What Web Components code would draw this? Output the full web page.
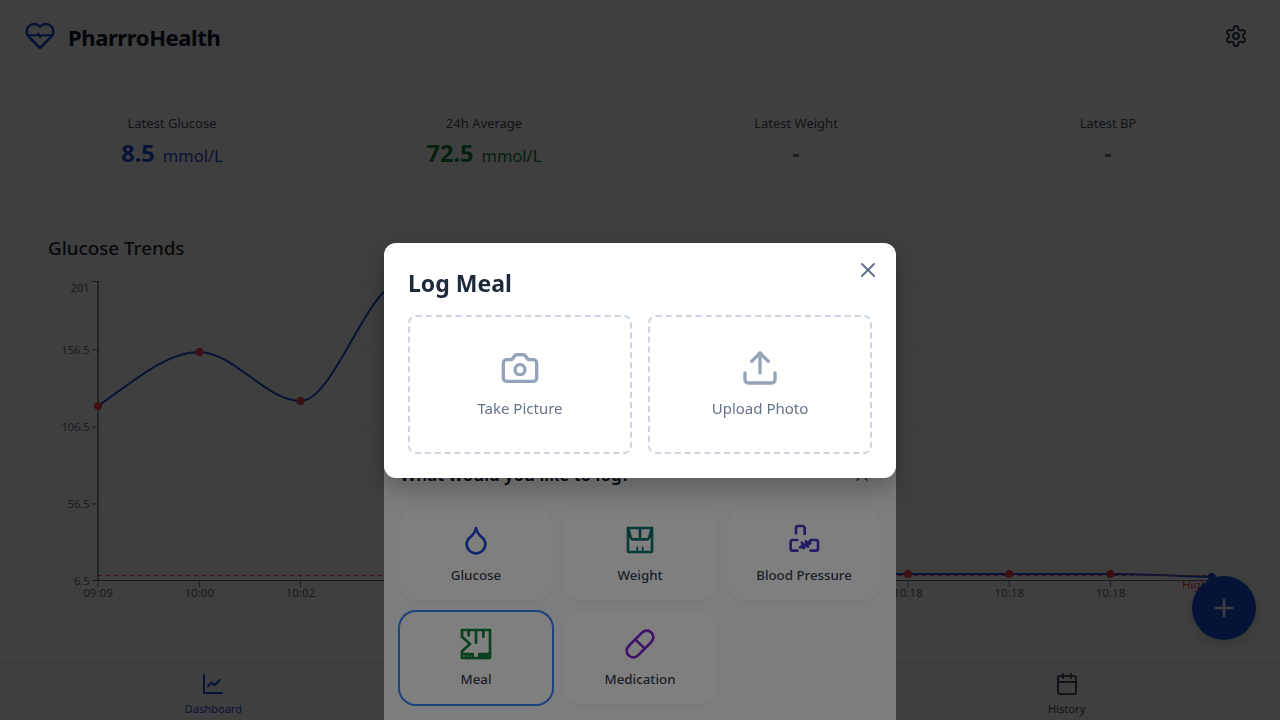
<!DOCTYPE html>
<html lang="en">
<head>
<meta charset="utf-8">
<title>PharrroHealth</title>
<style>
    html, body { margin: 0; height: 100%; overflow: hidden; }
    body { font-family: "Noto Sans", "Liberation Sans", sans-serif; color: #1e293b; background: #fcfdfd; }
</style>
</head>
<body>
<pharrro-app>
    <app-header slot="header"></app-header>
    <stat-row slot="main">
        <stat-card label="Latest Glucose" value="8.5" unit="mmol/L" color="#1d4ed8"></stat-card>
        <stat-card label="24h Average" value="72.5" unit="mmol/L" color="#15803d"></stat-card>
        <stat-card label="Latest Weight" value="-" color="#64748b"></stat-card>
        <stat-card label="Latest BP" value="-" color="#64748b"></stat-card>
    </stat-row>
    <trend-chart slot="main"></trend-chart>
    <bottom-nav slot="nav"></bottom-nav>
    <fab-button slot="fab"></fab-button>
</pharrro-app>

<overlay-layer place="end">
    <log-sheet>
        <log-type icon="droplet" color="#1d4ed8" label="Glucose"></log-type>
        <log-type icon="scale" color="#0f766e" label="Weight"></log-type>
        <log-type icon="pressure" color="#4338ca" label="Blood Pressure"></log-type>
        <log-type icon="meal" color="#15803d" label="Meal" selected></log-type>
        <log-type icon="pill" color="#7e22ce" label="Medication"></log-type>
    </log-sheet>
</overlay-layer>

<overlay-layer place="center">
    <meal-modal>
        <capture-option icon="camera" label="Take Picture"></capture-option>
        <capture-option icon="upload" label="Upload Photo"></capture-option>
    </meal-modal>
</overlay-layer>

<script>
const ICONS = {
    heart: '<path d="M19 14c1.49-1.46 3-3.21 3-5.5A5.5 5.5 0 0 0 16.5 3c-1.76 0-3 .5-4.5 2-1.5-1.5-2.74-2-4.5-2A5.5 5.5 0 0 0 2 8.5c0 2.3 1.5 4.05 3 5.5l7 7Z"/><path d="M2.500 11.500H10l1-1.500 1 3 1-1.500h8.500" stroke-width="1.500"/>',
    gear: '<path d="M12.220 2h-.44a2 2 0 0 0-2 2v.18a2 2 0 0 1-1 1.730l-.43.25a2 2 0 0 1-2 0l-.15-.08a2 2 0 0 0-2.730.73l-.22.38a2 2 0 0 0 .73 2.730l.15.1a2 2 0 0 1 1 1.720v.51a2 2 0 0 1-1 1.740l-.15.09a2 2 0 0 0-.73 2.730l.22.38a2 2 0 0 0 2.730.73l.15-.08a2 2 0 0 1 2 0l.43.25a2 2 0 0 1 1 1.730V20a2 2 0 0 0 2 2h.44a2 2 0 0 0 2-2v-.18a2 2 0 0 1 1-1.730l.43-.25a2 2 0 0 1 2 0l.15.08a2 2 0 0 0 2.730-.73l.22-.39a2 2 0 0 0-.73-2.730l-.15-.08a2 2 0 0 1-1-1.740v-.5a2 2 0 0 1 1-1.740l.15-.09a2 2 0 0 0 .73-2.730l-.22-.38a2 2 0 0 0-2.730-.73l-.15.08a2 2 0 0 1-2 0l-.43-.25a2 2 0 0 1-1-1.730V4a2 2 0 0 0-2-2z"/><circle cx="12" cy="12" r="3"/>',
    chart: '<path d="M3 3v18h18"/><path d="m18.700 8-5.100 5.200-2.800-2.700L7 14.300"/>',
    calendar: '<path d="M8 2v4"/><path d="M16 2v4"/><rect x="3" y="4" width="18" height="18" rx="2"/><path d="M3 10h18"/>',
    plus: '<path d="M5 12h14"/><path d="M12 5v14"/>',
    close: '<path d="M18 6 6 18"/><path d="m6 6 12 12"/>',
    droplet: '<path d="M12 22a7 7 0 0 0 7-7c0-2-1-3.900-3-5.500s-3.500-4-4-6.500c-.5 2.500-2 4.900-4 6.500C6 11.100 5 13 5 15a7 7 0 0 0 7 7z"/>',
    scale: '<path d="M3 3h18v17a1 1 0 0 1-1 1H4a1 1 0 0 1-1-1z"/><path d="M3.200 3 5 10q.3 1.500 2 1.500h10q1.700 0 2-1.500l1.800-7"/><path d="M12 3v8.500"/><path d="M10 17.500V21" stroke-width="1.300"/><path d="M14 17.500V21" stroke-width="1.300"/>',
    pressure: '<path d="M6 7V3a1.500 1.500 0 0 1 1.500-1.500h3.500A1.500 1.500 0 0 1 12.500 3v4.500"/><path d="M7 12H3.500A1.500 1.500 0 0 0 2 13.500v5A1.500 1.500 0 0 0 3.500 20H7"/><path d="M17 12h4a1.500 1.500 0 0 1 1.500 1.500v5A1.500 1.500 0 0 1 21 20h-4"/><path d="M9 17.500 16.500 13"/><path d="M11 18 17 14.500" stroke-width="1.500"/><path d="M10.500 14 12 18"/><path d="M13.500 13 15 17"/>',
    meal: '<path d="M1.500 1.500h21v21h-21v-5L7.500 12 1.500 6.500z"/><path d="M6.500 1.500v4"/><path d="M12 1.500V11"/><path d="M17.500 1.500v5"/><path d="M1.500 19.500h8v3"/><path d="M14.500 22.500v-3h8"/><path d="M4.500 19.500v3"/><path d="M18.500 19.500v3"/><path d="M7 20v2.500"/><path d="M16.500 20v2.500"/><path d="M20.500 20v2.500"/>',
    pill: '<path d="m10.500 20.500 10-10a4.950 4.950 0 1 0-7-7l-10 10a4.950 4.950 0 1 0 7 7Z"/><path d="m8.500 8.500 7 7"/>',
    camera: '<path d="M14.500 4h-5L7 7H4a2 2 0 0 0-2 2v9a2 2 0 0 0 2 2h16a2 2 0 0 0 2-2V9a2 2 0 0 0-2-2h-3l-2.500-3z"/><circle cx="12" cy="13" r="3"/>',
    upload: '<path d="M21 15v4a2 2 0 0 1-2 2H5a2 2 0 0 1-2-2v-4"/><polyline points="17 8 12 3 7 8"/><line x1="12" x2="12" y1="3" y2="15"/>',
};

class AppIcon extends HTMLElement {
    connectedCallback() {
        const size = this.getAttribute('size') || 24;
        this.attachShadow({ mode: 'open' });
        this.shadowRoot.innerHTML = `
            <style>
                :host { display: block; width: ${size}px; height: ${size}px; flex: none; }
                svg { display: block; }
            </style>
            <svg width="${size}" height="${size}" viewBox="0 0 24 24" fill="none" stroke="currentColor"
                stroke-width="2" stroke-linecap="round" stroke-linejoin="round">${ICONS[this.getAttribute('name')]}</svg>
        `;
    }
}

class PharrroApp extends HTMLElement {
    constructor() {
        super();
        this.attachShadow({ mode: 'open' });
        this.shadowRoot.innerHTML = `
            <style>
                :host { display: flex; flex-direction: column; height: 720px; position: relative; }
                main { flex: 1; min-height: 0; padding: 24px 24px 0; display: flex; flex-direction: column; gap: 24px; }
            </style>
            <slot name="header"></slot>
            <main><slot name="main"></slot></main>
            <slot name="nav"></slot>
            <slot name="fab"></slot>
        `;
    }
}

class AppHeader extends HTMLElement {
    constructor() {
        super();
        this.attachShadow({ mode: 'open' });
        this.shadowRoot.innerHTML = `
            <style>
                :host {
                    display: flex; align-items: center; justify-content: space-between;
                    padding: 20px 32px 20px 24px; background: #fff; border-bottom: 1px solid #f1f5f9;
                }
                .brand { display: flex; align-items: center; gap: 12px; }
                app-icon.logo { color: #1d4ed8; }
                h1 { margin: 0; padding-top: 2px; font-size: 22px; letter-spacing: -.4px; line-height: 30px; font-weight: 700; color: #0f172a; }
                .gear { color: #334155; }
            </style>
            <div class="brand">
                <app-icon class="logo" name="heart" size="32"></app-icon>
                <h1>PharrroHealth</h1>
            </div>
            <app-icon class="gear" name="gear"></app-icon>
        `;
    }
}

class StatRow extends HTMLElement {
    constructor() {
        super();
        this.attachShadow({ mode: 'open' });
        this.shadowRoot.innerHTML = `
            <style>
                :host { display: grid; grid-template-columns: repeat(4, 1fr); gap: 16px; }
            </style>
            <slot></slot>
        `;
    }
}

class StatCard extends HTMLElement {
    connectedCallback() {
        const unit = this.getAttribute('unit');
        this.attachShadow({ mode: 'open' });
        this.shadowRoot.innerHTML = `
            <style>
                :host {
                    display: block; height: 88px; box-sizing: border-box; padding: 16px 16px 0; text-align: center;
                    background: #fff; border-radius: 16px; box-shadow: 0 1px 2px rgba(0,0,0,.05);
                }
                .label { font-size: 13px; line-height: 20px; color: #475569; }
                .value { margin-top: 4px; line-height: 32px; color: ${this.getAttribute('color')}; }
                b { font-size: 23.500px; font-weight: 700; }
                span { font-size: 16.500px; margin-left: 8px; }
            </style>
            <div class="label">${this.getAttribute('label')}</div>
            <div class="value"><b>${this.getAttribute('value')}</b>${unit ? `<span>${unit}</span>` : ''}</div>
        `;
    }
}

class TrendChart extends HTMLElement {
    constructor() {
        super();
        this.attachShadow({ mode: 'open' });
        const xs = Array.from({ length: 12 }, (_, i) => 98 + i * 101.25);
        const ys = [406, 352, 401, 282, 574, 574, 574, 574, 574, 574, 574, 577];
        const times = ['09:09', '10:00', '10:02', '10:05', '10:18', '10:18', '10:18', '10:18', '10:18', '10:18', '10:18', '10:18'];
        const yTicks = [[281.500, 288, '201'], [350, 350, '156.5'], [427, 427, '106.5'], [504, 504, '56.5'], [580.500, 580.500, '6.5']];

        // monotone tangents, same idea as the chart lib's curve
        const slopes = xs.slice(1).map((x, i) => (ys[i + 1] - ys[i]) / (x - xs[i]));
        const tangent = slopes.map((s, i) => {
            if (i === 0) return s;
            const p = slopes[i - 1];
            return p * s <= 0 ? 0 : 2 * p * s / (p + s);
        });
        tangent[0] = slopes[0] * 1.3;
        tangent.push(slopes[slopes.length - 1]);
        let curve = `M${xs[0]} ${ys[0]}`;
        for (let i = 1; i < xs.length; i++) {
            const dx = (xs[i] - xs[i - 1]) / 3;
            curve += `C${xs[i - 1] + dx} ${ys[i - 1] + tangent[i - 1] * dx} ${xs[i] - dx} ${ys[i] - tangent[i] * dx} ${xs[i]} ${ys[i]}`;
        }

        const grid = [
            ...yTicks.slice(0, 4).map(t => `<line class="grid" x1="98" x2="1212" y1="${t[0]}" y2="${t[0]}"/>`),
            ...xs.map(x => `<line class="grid" x1="${x}" x2="${x}" y1="281" y2="580"/>`),
        ].join('');
        const yAxis = yTicks.map(t => `
            <line class="axis" x1="92" x2="98" y1="${t[0]}" y2="${t[0]}"/>
            <text class="y" x="89.500" y="${t[1] + 4}" text-anchor="end">${t[2]}</text>`).join('');
        const xAxis = xs.map((x, i) => `
            <line class="axis" x1="${x}" x2="${x}" y1="580.500" y2="587"/>
            <text x="${x}" y="596.500" text-anchor="middle">${times[i]}</text>`).join('');
        const dots = xs.map((x, i) => `<circle cx="${x}" cy="${ys[i]}" r="4" fill="${i === 11 ? '#1d4ed8' : '#ef4444'}"/>`).join('');

        this.shadowRoot.innerHTML = `
            <style>
                :host {
                    display: block; flex: 1; min-height: 0; box-sizing: border-box; padding: 24px 24px 0; margin-bottom: 23px;
                    background: #fff; border-radius: 16px; box-shadow: 0 1px 2px rgba(0,0,0,.05);
                }
                h2 { margin: 1px 0 10px; font-size: 18.800px; line-height: 28px; font-weight: 500; color: #1e293b; }
                svg { display: block; overflow: visible; }
                text { font-size: 11.600px; fill: #64748b; }
                text.y { font-size: 11px; }
                .grid { stroke: #e2e8f0; stroke-dasharray: 3 3; }
                .axis { stroke: #64748b; }
            </style>
            <h2>Glucose Trends</h2>
            <svg width="1184" height="340" viewBox="48 272 1184 340">
                ${grid}
                <line x1="98" x2="98" y1="281" y2="581" stroke="#64748b" stroke-width="1.500"/>
                <line class="axis" x1="98" x2="1212" y1="580.500" y2="580.500"/>
                ${yAxis}${xAxis}
                <path d="${curve}" fill="none" stroke="#1d4ed8" stroke-width="2"/>
                <line x1="98" x2="1212" y1="575.500" y2="575.500" stroke="#ef4444" stroke-dasharray="4 4"/>
                ${dots}
                <text x="1182" y="589" style="fill:#ef4444">High</text>
            </svg>
        `;
    }
}

class BottomNav extends HTMLElement {
    constructor() {
        super();
        this.attachShadow({ mode: 'open' });
        this.shadowRoot.innerHTML = `
            <style>
                :host {
                    display: grid; grid-template-columns: repeat(3, 1fr); height: 56px;
                    background: #fff; border-top: 1px solid #e2e8f0;
                }
                .item {
                    display: flex; flex-direction: column; align-items: center; padding-top: 8px;
                    font-size: 11.100px; line-height: 16px; color: #475569;
                }
                .item span { margin-top: 5px; }
                .active { color: #1d4ed8; }
            </style>
            <div class="item active"><app-icon name="chart"></app-icon><span>Dashboard</span></div>
            <div class="item"></div>
            <div class="item"><app-icon name="calendar"></app-icon><span>History</span></div>
        `;
    }
}

class FabButton extends HTMLElement {
    constructor() {
        super();
        this.attachShadow({ mode: 'open' });
        this.shadowRoot.innerHTML = `
            <style>
                :host {
                    position: absolute; left: 1192px; top: 576px; width: 64px; height: 64px; border-radius: 50%;
                    display: flex; align-items: center; justify-content: center; color: #fff;
                    background: #1d4ed8; box-shadow: 0 4px 12px rgba(0,0,0,.15);
                }
            </style>
            <app-icon name="plus" size="28"></app-icon>
        `;
    }
}

class OverlayLayer extends HTMLElement {
    connectedCallback() {
        this.attachShadow({ mode: 'open' });
        const place = this.getAttribute('place') === 'end' ? 'flex-end' : 'center';
        this.shadowRoot.innerHTML = `
            <style>
                :host {
                    position: fixed; inset: 0; display: flex; justify-content: center; align-items: ${place};
                    background: rgba(0,0,0,.5);
                }
            </style>
            <slot></slot>
        `;
    }
}

class LogSheet extends HTMLElement {
    constructor() {
        super();
        this.attachShadow({ mode: 'open' });
        this.shadowRoot.innerHTML = `
            <style>
                :host { display: block; width: 512px; box-sizing: border-box; padding: 16px; background: #f8fafc; }
                header { display: flex; align-items: center; justify-content: space-between; margin-bottom: 19px; }
                h3 { margin: 0; font-size: 17.100px; line-height: 28px; font-weight: 600; color: #0f172a; }
                app-icon { color: #475569; margin-right: 8px; }
                .grid { display: grid; grid-template-columns: repeat(3, 1fr); gap: 12px; }
            </style>
            <header><h3>What would you like to log?</h3><app-icon name="close" size="20"></app-icon></header>
            <div class="grid"><slot></slot></div>
        `;
    }
}

class LogType extends HTMLElement {
    connectedCallback() {
        this.attachShadow({ mode: 'open' });
        const ring = this.hasAttribute('selected') ? 'box-shadow: 0 0 0 2px #3b82f6;' : 'box-shadow: 0 1px 2px rgba(0,0,0,.05);';
        this.shadowRoot.innerHTML = `
            <style>
                :host {
                    display: flex; flex-direction: column; align-items: center; gap: 8px;
                    padding: 16px; background: #fff; border-radius: 16px; ${ring}
                }
                app-icon { color: ${this.getAttribute('color')}; }
                span { font-size: 13.300px; padding-top: 2px; line-height: 18px; font-weight: 500; color: #334155; white-space: nowrap; }
            </style>
            <app-icon name="${this.getAttribute('icon')}" size="32"></app-icon>
            <span>${this.getAttribute('label')}</span>
        `;
    }
}

class MealModal extends HTMLElement {
    constructor() {
        super();
        this.attachShadow({ mode: 'open' });
        this.shadowRoot.innerHTML = `
            <style>
                :host {
                    display: block; position: relative; width: 512px; box-sizing: border-box; padding: 24px;
                    background: #fff; border-radius: 12px; box-shadow: 0 10px 25px rgba(0,0,0,.25);
                }
                h2 { margin: 0 0 16px; font-size: 23px; line-height: 32px; font-weight: 700; color: #1e293b; }
                .close { position: absolute; top: 15px; right: 16px; color: #64748b; }
                .options { display: grid; grid-template-columns: 1fr 1fr; gap: 16px; }
            </style>
            <h2>Log Meal</h2>
            <app-icon class="close" name="close"></app-icon>
            <div class="options"><slot></slot></div>
        `;
    }
}

class CaptureOption extends HTMLElement {
    connectedCallback() {
        this.attachShadow({ mode: 'open' });
        this.shadowRoot.innerHTML = `
            <style>
                :host {
                    display: flex; flex-direction: column; align-items: center; gap: 8px;
                    padding: 32px 16px; border: 2px dashed #cbd5e1; border-radius: 8px;
                }
                app-icon { color: #94a3b8; margin-top: -1px; }
                span { font-size: 15px; line-height: 24px; color: #64748b; }
            </style>
            <app-icon name="${this.getAttribute('icon')}" size="40"></app-icon>
            <span>${this.getAttribute('label')}</span>
        `;
    }
}

customElements.define('app-icon', AppIcon);
customElements.define('pharrro-app', PharrroApp);
customElements.define('app-header', AppHeader);
customElements.define('stat-row', StatRow);
customElements.define('stat-card', StatCard);
customElements.define('trend-chart', TrendChart);
customElements.define('bottom-nav', BottomNav);
customElements.define('fab-button', FabButton);
customElements.define('overlay-layer', OverlayLayer);
customElements.define('log-sheet', LogSheet);
customElements.define('log-type', LogType);
customElements.define('meal-modal', MealModal);
customElements.define('capture-option', CaptureOption);
</script>
</body>
</html>
